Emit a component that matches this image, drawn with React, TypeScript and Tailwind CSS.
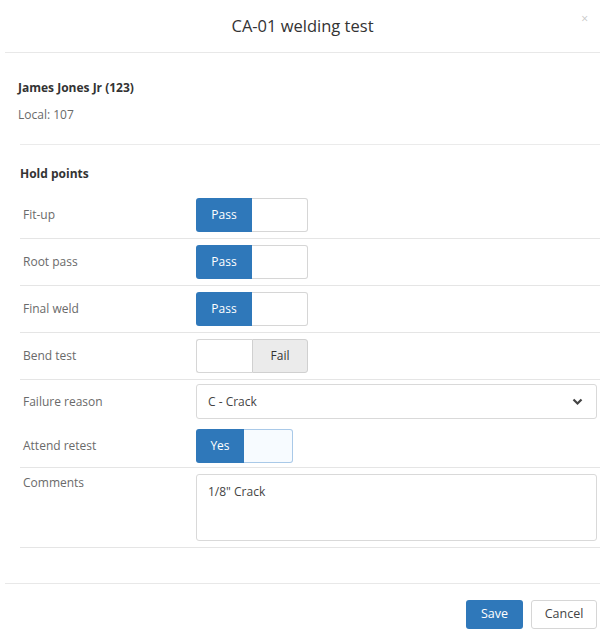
/**
 * Welding test dialog
 * Hold point results for one welder, with retest and comments
 */

type Choice = 'pass' | 'fail';

interface HoldPoint {
  label: string;
  result: Choice;
}

const holdPoints: HoldPoint[] = [
  { label: 'Fit-up', result: 'pass' },
  { label: 'Root pass', result: 'pass' },
  { label: 'Final weld', result: 'pass' },
  { label: 'Bend test', result: 'fail' },
];

function PassFailToggle({ result }: { result: Choice }) {
  return (
    <div className="flex h-[34px] w-[112px] text-[12px]">
      {result === 'pass' ? (
        <>
          <div className="flex w-[56px] items-center justify-center rounded-l-[3px] bg-[#2f78ba] text-white">
            Pass
          </div>
          <div className="flex-1 rounded-r-[3px] border border-l-0 border-[#d6d6d6] bg-white" />
        </>
      ) : (
        <>
          <div className="w-[56px] rounded-l-[3px] border border-r-0 border-[#d6d6d6] bg-white" />
          <div className="flex flex-1 items-center justify-center rounded-r-[3px] border border-[#d0d0d0] bg-[#ebebeb] text-[#333]">
            Fail
          </div>
        </>
      )}
    </div>
  );
}

function FormRow({
  label,
  children,
  divider = true,
  alignTop = false,
  pad = 'py-[6px]',
}: {
  label: string;
  children: React.ReactNode;
  divider?: boolean;
  alignTop?: boolean;
  pad?: string;
}) {
  return (
    <div
      className={`flex ${alignTop ? 'items-start' : 'items-center'} ${pad} pl-[3px] pr-[3px] ${
        divider ? 'border-b border-[#e5e5e5]' : ''
      }`}
    >
      <div className="w-[173px] shrink-0 text-[12px] text-[#6a6a6a]">{label}</div>
      <div className="flex-1">{children}</div>
    </div>
  );
}

export default function App() {
  return (
    <div
      className="h-[629px] w-[600px] overflow-hidden bg-white text-[#333]"
      style={{ fontFamily: '"Open Sans", "Liberation Sans", sans-serif' }}
    >
      {/* header */}
      <div className="relative ml-[5px] flex h-[53px] items-center justify-center border-b border-[#e8e8e8]">
        <h1 className="text-[16.5px] font-normal text-[#333]">CA-01 welding test</h1>
        <span className="absolute right-[12px] top-[13px] text-[12px] leading-none text-[#c8c8c8]">
          ×
        </span>
      </div>

      {/* welder */}
      <div className="pl-[18px] pt-[26px]">
        <div className="text-[12px] font-bold text-[#333]">James Jones Jr (123)</div>
        <div className="mt-[9px] text-[12px] text-[#6a6a6a]">Local: 107</div>
      </div>
      <div className="ml-[20px] mt-[20px] border-b border-[#ebebeb]" />

      {/* hold points */}
      <div className="pl-[20px]">
        <div className="pt-[20px] pb-[9px] text-[12px] font-bold text-[#333]">Hold points</div>

        {holdPoints.map((hp) => (
          <FormRow key={hp.label} label={hp.label}>
            <PassFailToggle result={hp.result} />
          </FormRow>
        ))}

        <FormRow label="Failure reason" divider={false} pad="py-[4px]">
          <div className="flex h-[35px] items-center justify-between rounded-[3px] border border-[#d9d9d9] bg-white pl-[11px] pr-[13px] text-[12px] text-[#444]">
            <span>C - Crack</span>
            <svg width="11" height="8" viewBox="0 0 11 8" className="text-[#444]">
              <path d="M1.5 1.5 L5.5 5.5 L9.5 1.5" fill="none" stroke="currentColor" strokeWidth="2.2" />
            </svg>
          </div>
        </FormRow>

        <FormRow label="Attend retest" pad="pt-[6px] pb-[4px]">
          <div className="flex h-[34px] w-[97px] text-[12px]">
            <div className="flex w-[48px] items-center justify-center rounded-l-[3px] bg-[#2f78ba] text-white">
              Yes
            </div>
            <div className="flex-1 rounded-r-[3px] border border-l-0 border-[#a9c9e8] bg-[#f7fbff]" />
          </div>
        </FormRow>

        <FormRow label="Comments" alignTop>
          <div className="h-[67px] rounded-[3px] border border-[#d9d9d9] bg-white px-[11px] pt-[8px] text-[12px] text-[#444]">
            1/8" Crack
          </div>
        </FormRow>
      </div>

      {/* footer */}
      <div className="ml-[5px] mt-[35px] flex justify-end gap-[8px] border-t border-[#e8e8e8] pr-[3px] pt-[16px]">
        <button className="h-[29px] w-[57px] rounded-[3px] bg-[#2f78ba] text-[12.5px] text-white">
          Save
        </button>
        <button className="h-[29px] w-[66px] rounded-[3px] border border-[#d6d6d6] bg-white text-[12.5px] text-[#444]">
          Cancel
        </button>
      </div>
    </div>
  );
}
